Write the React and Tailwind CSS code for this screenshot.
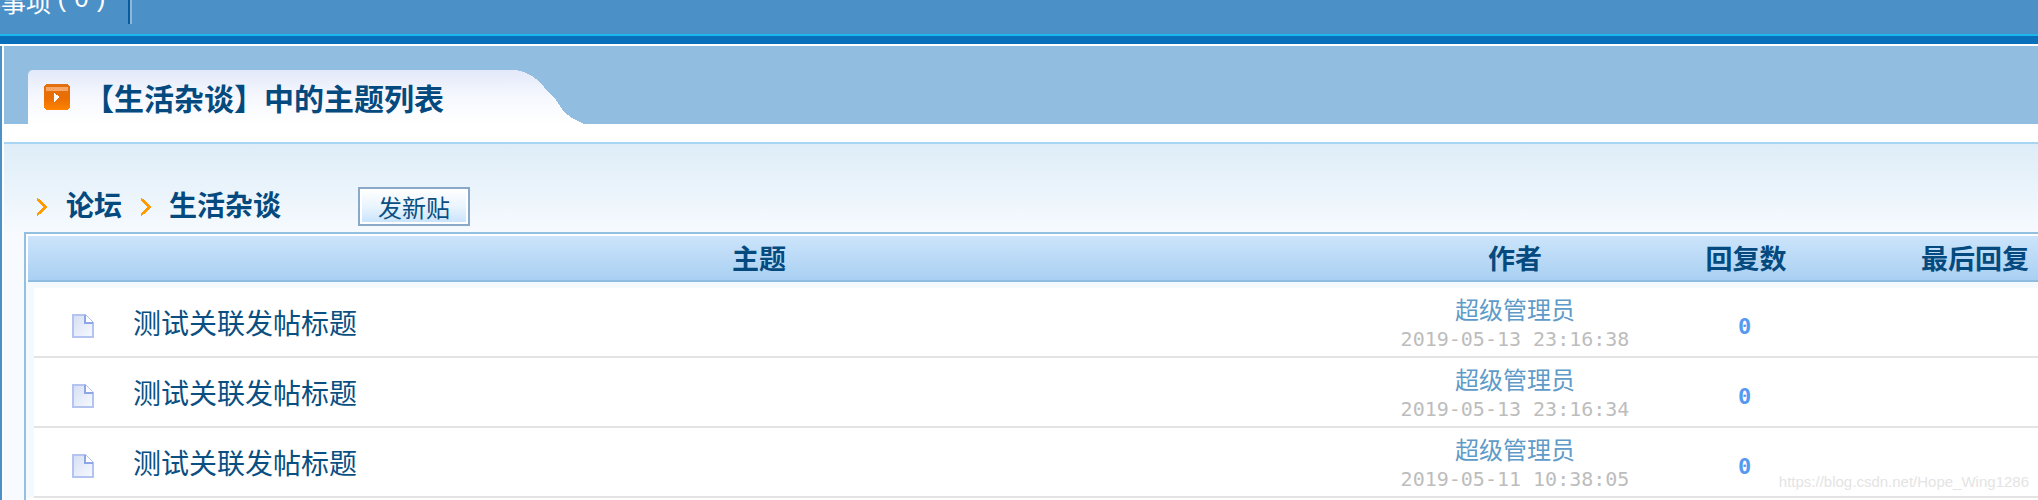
import React from "react";

const cjk = "font-['Noto_Sans_CJK_SC',sans-serif]";
const topics = [
  { title: "测试关联发帖标题", author: "超级管理员", time: "2019-05-13 23:16:38", replies: 0 },
  { title: "测试关联发帖标题", author: "超级管理员", time: "2019-05-13 23:16:34", replies: 0 },
  { title: "测试关联发帖标题", author: "超级管理员", time: "2019-05-11 10:38:05", replies: 0 },
];

const PlayIcon = () => (
  <svg width="26" height="26" viewBox="0 0 26 26" shapeRendering="crispEdges" className="shrink-0">
    <defs>
      <linearGradient id="orange" x1="0" y1="0" x2="0" y2="1">
        <stop offset="0" stopColor="#e2700f" />
        <stop offset="0.55" stopColor="#e96e04" />
        <stop offset="1" stopColor="#ff8400" />
      </linearGradient>
    </defs>
    <path d="M2 0H24V1H25V2H26V24H25V25H24V26H2V25H1V24H0V2H1V1H2Z" fill="url(#orange)" />
    <rect x="2" y="3" width="22" height="4" fill="#f7a868" />
    <path d="M10 8.5L15.5 13L10 18Z" fill="#ffffff" />
  </svg>
);

const DocIcon = () => (
  <svg width="22" height="24" viewBox="0 0 22 24" shapeRendering="crispEdges" className="mt-2 ml-[38px]">
    <defs>
      <linearGradient id="paper" x1="0" y1="0" x2="1" y2="1">
        <stop offset="0" stopColor="#d5dff3" />
        <stop offset="1" stopColor="#f7f9fe" />
      </linearGradient>
    </defs>
    <path d="M1 1H13L21 9V23H1Z" fill="url(#paper)" stroke="#b3c4f0" strokeWidth="2" />
    <path d="M13 1V9H21" fill="#ffffff" stroke="#8ea6e6" strokeWidth="2" />
  </svg>
);

const Chevron = () => (
  <svg width="12" height="18" viewBox="0 0 12 18" fill="none" shapeRendering="crispEdges" className="shrink-0">
    <path d="M1 1L10 9L1 17" stroke="#ff9a00" strokeWidth="2.6" />
  </svg>
);

const App = () => {
  return (
    <div className={`relative flex h-[500px] w-[2038px] flex-col overflow-hidden bg-white ${cjk}`}>
      <div className="h-[34px] shrink-0 bg-[#4b90c6]">
        <div className="flex h-[24px] items-start">
          <div className="-mt-[13px] flex w-[128px] justify-end pr-[20px] text-[25px] leading-[28px] whitespace-nowrap text-white">
            待办事项<span className="ml-[4px] font-['Liberation_Mono',monospace]">(</span>
            <span className="mx-[4px] font-['Liberation_Mono',monospace]">0</span>
            <span className="font-['Liberation_Mono',monospace]">)</span>
          </div>
          <div className="h-[24px] w-[4px] border-r-2 border-l-2 border-r-[#8ab8de] border-l-[#0a5a9c]" />
        </div>
      </div>
      <div className="h-[2px] shrink-0 bg-[#1cb5ec]" />
      <div className="h-[8px] shrink-0 bg-[#0a6fba]" />
      <div className="h-[2px] shrink-0 bg-white" />

      <div className="flex-1 border-l-2 border-[#4b90c6] pl-[2px]">
        <div className="flex h-[78px] items-end bg-[#91bde0] pl-[24px]">
          <div className="flex h-[54px] w-[488px] items-center gap-[14px] rounded-tl-[5px] bg-gradient-to-b from-[#e3e9fa] via-[#f6f8fe] to-white pl-[16px]">
            <PlayIcon />
            <span className="text-[30px] leading-[40px] font-bold whitespace-nowrap text-[#044a7e]">
              【生活杂谈】中的主题列表
            </span>
          </div>
          <svg width="68" height="54" viewBox="0 0 68 54" shapeRendering="crispEdges" className="block">
            <defs>
              <linearGradient id="tabEdge" x1="0" y1="0" x2="0" y2="1">
                <stop offset="0" stopColor="#e3e9fa" />
                <stop offset="0.5" stopColor="#f6f8fe" />
                <stop offset="1" stopColor="#ffffff" />
              </linearGradient>
            </defs>
            <polygon points="0,0 8,2 16,6 24,12 32,22 40,30 48,42 56,48 68,54 0,54" fill="url(#tabEdge)" />
          </svg>
        </div>
        <div className="h-[18px] bg-white" />

        <div className="h-[90px] border-t-2 border-[#a9d5f5] bg-gradient-to-b from-[#deedf8] to-[#f6fafe] pt-[43px]">
          <div className="flex h-[39px] items-center pl-[32px] text-[28px] leading-[34px] font-bold text-[#044a7e]">
            <Chevron />
            <span className="-mt-[6px] ml-[18px] w-[74px] whitespace-nowrap">论坛</span>
            <Chevron />
            <span className="-mt-[6px] ml-[17px] w-[112px] whitespace-nowrap">生活杂谈</span>
            <button className="ml-[77px] flex h-[39px] w-[112px] items-center justify-center border-2 border-[#8aa8c8] bg-gradient-to-b from-white via-[#eaf4fd] to-[#c6e2fb] text-[24px] font-normal text-[#0a4f82] shadow-[inset_0_0_0_2px_#ffffff]">
              发新贴
            </button>
          </div>
        </div>

        <div className="h-[268px] bg-[#f7fbff] pl-[20px]">
          <div className="h-full border-t-2 border-l-2 border-[#93bfe0] bg-white">
            <div className="pt-[2px] pl-[2px]">
              <div className="grid h-[46px] grid-cols-[90px_1282px_230px_232px_226px] items-center border-b-2 border-[#8ebbe0] bg-gradient-to-b from-[#cce4fb] to-[#a9d0f2] text-center text-[27px] font-bold text-[#044a7e]">
                <div />
                <div>主题</div>
                <div>作者</div>
                <div>回复数</div>
                <div className="whitespace-nowrap">最后回复</div>
              </div>
            </div>
            <div className="bg-[#f4f9fe] pt-[6px] pl-[8px]">
              {topics.map((t, i) => (
                <div
                  key={i}
                  className="grid h-[70px] grid-cols-[84px_1282px_230px_232px_226px] items-center border-b-2 border-[#e3e3e3] bg-white"
                >
                  <DocIcon />
                  <div className="pl-[15px] text-[28px] text-[#0a4f82]">{t.title}</div>
                  <div className="flex flex-col items-center self-start pt-[6px]">
                    <span className="text-[24px] leading-[30px] text-[#5f9bc8]">{t.author}</span>
                    <span className="mt-[1px] font-['DejaVu_Sans_Mono',monospace] text-[20px] leading-[28px] whitespace-nowrap text-[#bdbdbd]">
                      {t.time}
                    </span>
                  </div>
                  <div className="pt-[8px] pr-[3px] text-center font-['DejaVu_Sans_Mono',monospace] text-[22px] font-bold text-[#5599f0]">
                    {t.replies}
                  </div>
                  <div />
                </div>
              ))}
            </div>
          </div>
        </div>
      </div>

      <div className="absolute top-[472px] right-[9px] font-['Liberation_Sans',sans-serif] text-[15px] leading-[20px] text-[#e4e4e4]">
        https://blog.csdn.net/Hope_Wing1286
      </div>
    </div>
  );
};

export default App;
